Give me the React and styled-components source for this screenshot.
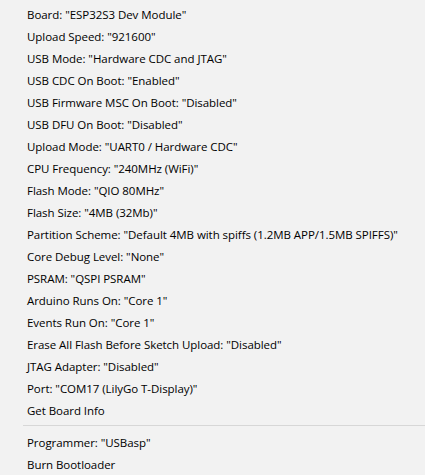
import React from "react";
import styled, { createGlobalStyle } from "styled-components";

const GlobalStyle = createGlobalStyle`
	html, body {
		margin: 0;
		padding: 0;
		background: #f2f2f2;
	}
`;

// the whole dropdown panel
const Menu = styled.ul`
	list-style: none;
	margin: 0;
	padding: 3px 0 0;
	width: 425px;
	height: 475px;
	box-sizing: border-box;
	overflow: hidden;
	background: #f2f2f2;
	font-family: "Open Sans", "Noto Sans", sans-serif;
	font-size: 11.5px;
	letter-spacing: -0.05px;
	color: #000;
`;

const Item = styled.li`
	display: flex;
	align-items: center;
	height: 22px;
	padding-left: 27px;
	white-space: nowrap;
`;

const Separator = styled.li`
	height: 1px;
	margin: 4px 0 5px 23px;
	background: #d7d7d7;
`;

const boardItems = [
	'Board: "ESP32S3 Dev Module"',
	'Upload Speed: "921600"',
	'USB Mode: "Hardware CDC and JTAG"',
	'USB CDC On Boot: "Enabled"',
	'USB Firmware MSC On Boot: "Disabled"',
	'USB DFU On Boot: "Disabled"',
	'Upload Mode: "UART0 / Hardware CDC"',
	'CPU Frequency: "240MHz (WiFi)"',
	'Flash Mode: "QIO 80MHz"',
	'Flash Size: "4MB (32Mb)"',
	'Partition Scheme: "Default 4MB with spiffs (1.2MB APP/1.5MB SPIFFS)"',
	'Core Debug Level: "None"',
	'PSRAM: "QSPI PSRAM"',
	'Arduino Runs On: "Core 1"',
	'Events Run On: "Core 1"',
	'Erase All Flash Before Sketch Upload: "Disabled"',
	'JTAG Adapter: "Disabled"',
	'Port: "COM17 (LilyGo T-Display)"',
	"Get Board Info",
];

const toolItems = ['Programmer: "USBasp"', "Burn Bootloader"];

export default function App() {
	return (
		<>
			<GlobalStyle />
			<Menu>
				{boardItems.map((label) => (
					<Item key={label}>{label}</Item>
				))}
				<Separator />
				{toolItems.map((label) => (
					<Item key={label}>{label}</Item>
				))}
			</Menu>
		</>
	);
}
